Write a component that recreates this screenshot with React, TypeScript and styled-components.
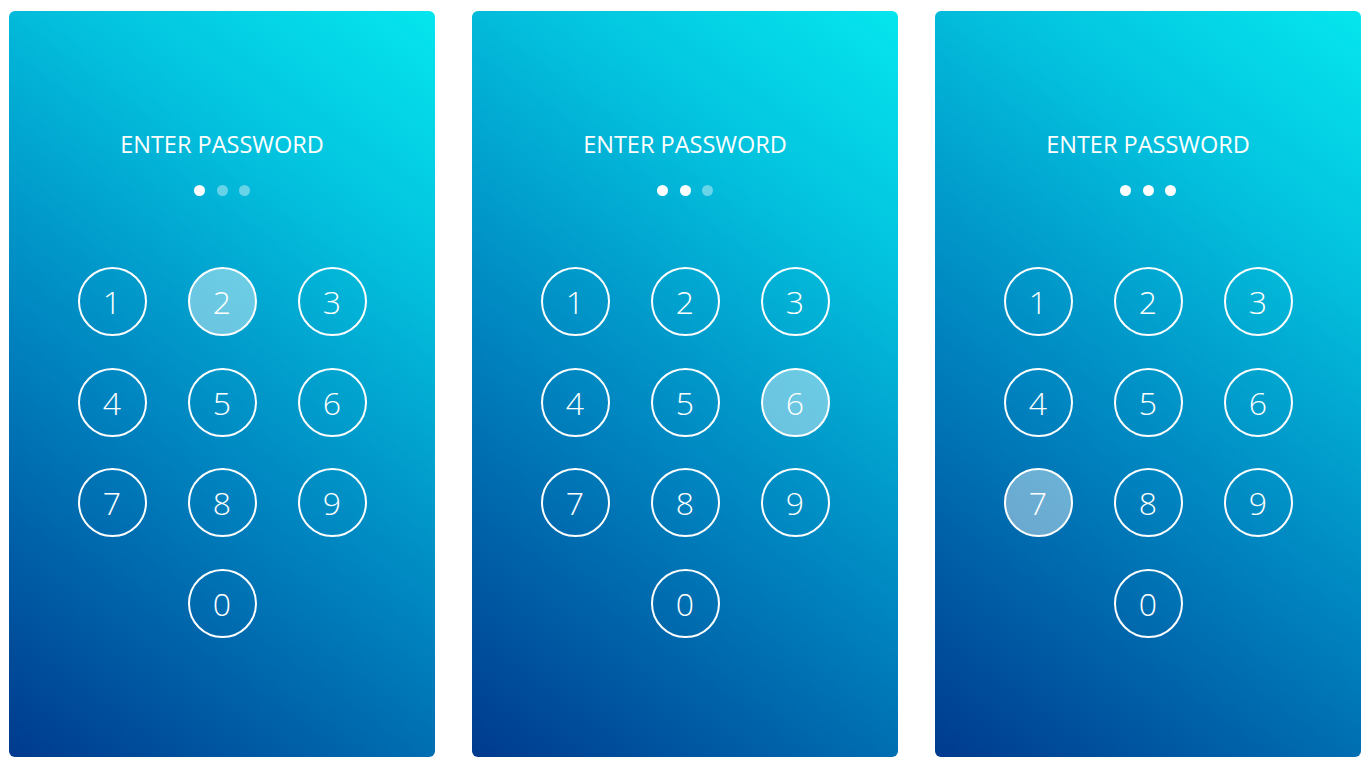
import React from "react";
import styled, { createGlobalStyle } from "styled-components";

const GlobalStyle = createGlobalStyle`
  html, body { margin: 0; padding: 0; background: #ffffff; }
  body { font-family: "Open Sans", "Liberation Sans", sans-serif; }
`;

const Page = styled.div`
  display: flex;
  gap: 37px;
  padding: 11px 9px 12px 9px;
`;

const Card = styled.div`
  width: 426px;
  height: 746px;
  border-radius: 6px;
  background: linear-gradient(36deg, #003a8e 0%, #0085c0 42%, #03c2de 75%, #05e6ee 100%);
  display: flex;
  flex-direction: column;
  align-items: center;
  box-sizing: border-box;
  padding-top: 117px;
`;

const Title = styled.div`
  color: #ffffff;
  font-family: "Open Sans", "Liberation Sans", sans-serif;
  font-size: 23.5px;
  line-height: 32px;
  font-weight: 400;
  letter-spacing: 0;
`;

const Dots = styled.div`
  display: flex;
  gap: 11.5px;
  margin-top: 25px;
`;

const Dot = styled.span<{ $on: boolean }>`
  width: 11px;
  height: 11px;
  border-radius: 50%;
  background: ${(p) => (p.$on ? "#ffffff" : "rgba(255,255,255,0.4)")};
`;

const Pad = styled.div`
  display: grid;
  grid-template-columns: repeat(3, 69px);
  grid-auto-rows: 69px;
  column-gap: 41px;
  row-gap: 31.5px;
  margin-top: 71px;
`;

const Key = styled.div<{ $active: boolean; $col?: number }>`
  box-sizing: border-box;
  width: 69px;
  height: 69px;
  border-radius: 50%;
  border: 2px solid #ffffff;
  background: ${(p) => (p.$active ? "rgba(255,255,255,0.42)" : "transparent")};
  color: #ffffff;
  font-family: "Open Sans", "Liberation Sans", sans-serif;
  font-weight: 300;
  font-size: 32px;
  display: flex;
  align-items: center;
  justify-content: center;
  ${(p) => (p.$col ? `grid-column: ${p.$col};` : "")}
`;

const keys = ["1", "2", "3", "4", "5", "6", "7", "8", "9", "0"];

function Screen({ filled, active }: { filled: number; active: string }) {
  return (
    <Card>
      <Title>ENTER PASSWORD</Title>
      <Dots>
        {[0, 1, 2].map((i) => (
          <Dot key={i} $on={i < filled} />
        ))}
      </Dots>
      <Pad>
        {keys.map((k) => (
          <Key key={k} $active={k === active} $col={k === "0" ? 2 : undefined}>
            {k}
          </Key>
        ))}
      </Pad>
    </Card>
  );
}

export default function App() {
  return (
    <>
      <GlobalStyle />
      <Page>
        <Screen filled={1} active="2" />
        <Screen filled={2} active="6" />
        <Screen filled={3} active="7" />
      </Page>
    </>
  );
}
